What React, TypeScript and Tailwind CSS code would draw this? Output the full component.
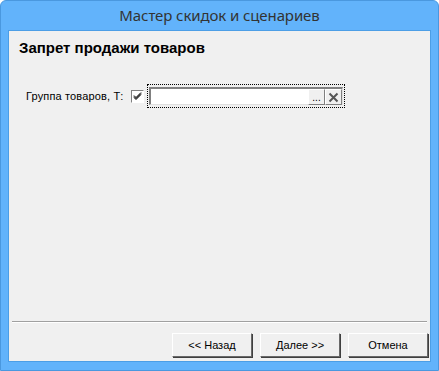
const App = () => {
  return (
    <div className="w-[439px] h-[371px] bg-white">
      <div className="w-[439px] h-[371px] bg-[#62b3fb] border border-[#4a98df] rounded-t-[6px] flex flex-col">
        {/* title bar */}
        <div className="h-[29px] flex items-center justify-center text-[15px] text-[#333] font-['Noto_Sans',sans-serif] tracking-[-0.1px]">
          Мастер скидок и сценариев
        </div>

        {/* client area */}
        <div className="mx-[7px] h-[332px] bg-[#f0f0f0] border border-[#4c9ee6] flex flex-col font-['Liberation_Sans',Arial,sans-serif] text-black">
          <div className="pl-[10px] pt-[8px] text-[15px] font-bold leading-[17px]">
            Запрет продажи товаров
          </div>

          <div className="mt-[28px] flex items-center h-[24px]">
            <span className="ml-[17px] w-[105px] text-[11px] tracking-[0.15px]">Группа товаров, Т:</span>
            <span className="w-[13px] h-[13px] border border-t-[#808080] border-l-[#808080] border-b-white border-r-white bg-white flex items-center justify-center">
              <svg width="9" height="9" viewBox="0 0 9 9">
                <path d="M1 3.5 L3 5.5 L8 0.5 M1 4.5 L3 6.5 L8 1.5 M1 5.5 L3 7.5 L8 2.5" stroke="#000" strokeWidth="1" fill="none" />
              </svg>
            </span>
            <div className="ml-[3px] w-[198px] h-[24px] border border-dotted border-black flex items-center px-[1px]">
              <div className="flex-1 h-[18px] bg-white border-t-2 border-l-2 border-t-[#808080] border-l-[#808080] border-b border-r border-b-[#e0e0e0] border-r-[#e0e0e0] flex justify-end">
                <div className="w-[17px] h-[16px] bg-[#f0f0f0] border border-t-white border-l-white border-b-[#808080] border-r-[#808080] flex items-end justify-center text-[10px] leading-[10px] pb-[1px]">
                  ...
                </div>
                <div className="w-[17px] h-[16px] bg-[#f0f0f0] border border-t-white border-l-white border-b-[#808080] border-r-[#808080] flex items-center justify-center">
                  <svg width="11" height="11" viewBox="0 0 11 11">
                    <path d="M1.5 1.5 L9.5 9.5 M9.5 1.5 L1.5 9.5" stroke="#555" strokeWidth="2" />
                  </svg>
                </div>
              </div>
            </div>
          </div>

          <div className="flex-1" />

          <div className="mx-[3px] h-[2px] border-t border-t-[#a0a0a0] border-b border-b-white" />

          <div className="mt-[10px] mb-[4px] flex justify-end gap-[8px] pr-[2px] text-[11px]">
            {["<< Назад", "Далее >>", "Отмена"].map((t) => (
              <div
                key={t}
                className="w-[80px] h-[24px] flex items-center justify-center bg-[#f0f0f0] border border-t-white border-l-white border-b-[#696969] border-r-[#696969] shadow-[1px_1px_0_#404040]"
              >
                {t}
              </div>
            ))}
          </div>
        </div>
      </div>
    </div>
  );
};

export default App;
